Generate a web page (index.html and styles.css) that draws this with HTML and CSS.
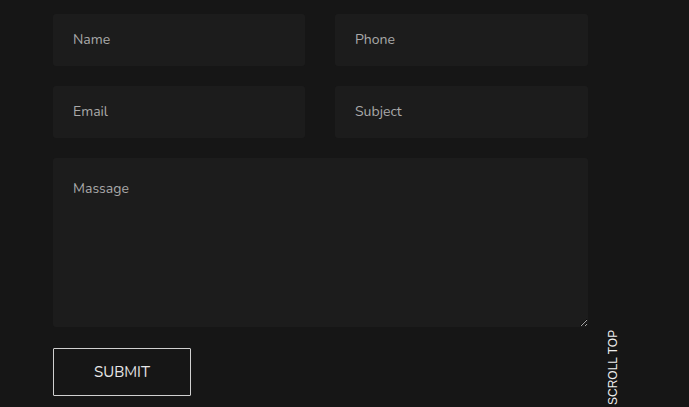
FILE: index.html
```html
<!DOCTYPE html>
<html>
<head>
<meta charset="utf-8">
<link rel="stylesheet" href="styles.css">
</head>
<body>
<form class="contact">
  <div class="grid">
    <input class="field" type="text" placeholder="Name">
    <input class="field" type="text" placeholder="Phone">
    <input class="field" type="email" placeholder="Email">
    <input class="field" type="text" placeholder="Subject">
    <textarea class="field message" placeholder="Massage"></textarea>
  </div>
  <button class="submit" type="button">SUBMIT</button>
</form>
<a class="scroll-top" href="#">SCROLL TOP</a>
</body>
</html>
```
FILE: styles.css
```css
html, body {
  margin: 0;
  padding: 0;
  background: #161616;
  height: 100%;
  overflow: hidden;
}
body {
  font-family: "Nunito", "Lato", "Open Sans", sans-serif;
}
.contact {
  width: 535px;
  padding: 14px 0 0 53px;
}
.grid {
  display: grid;
  grid-template-columns: 252px 253px;
  column-gap: 30px;
  row-gap: 20px;
}
.field {
  box-sizing: border-box;
  height: 52px;
  background: #1c1c1c;
  border: none;
  border-radius: 3px;
  padding: 0 20px 2px;
  font-family: inherit;
  font-size: 14px;
  color: #ddd;
  outline: none;
}
.field::placeholder {
  color: #a9a9a9;
  opacity: 1;
}
.message {
  grid-column: 1 / 3;
  height: 169px;
  padding: 21px 20px;
  resize: vertical;
}
.submit {
  margin-top: 21px;
  width: 138px;
  height: 48px;
  background: transparent;
  border: 1px solid #d0d0d0;
  border-radius: 1px;
  color: #e6e6e6;
  font-family: inherit;
  font-size: 15px;
  letter-spacing: 0;
}
.scroll-top {
  position: absolute;
  left: 607px;
  top: 332px;
  width: 13px;
  height: 73px;
  color: #eeeeee;
  text-decoration: none;
  font-family: "Liberation Sans", sans-serif;
  font-size: 12px;
  writing-mode: vertical-rl;
  transform: rotate(180deg);
  white-space: nowrap;
  line-height: 13px;
}
```
